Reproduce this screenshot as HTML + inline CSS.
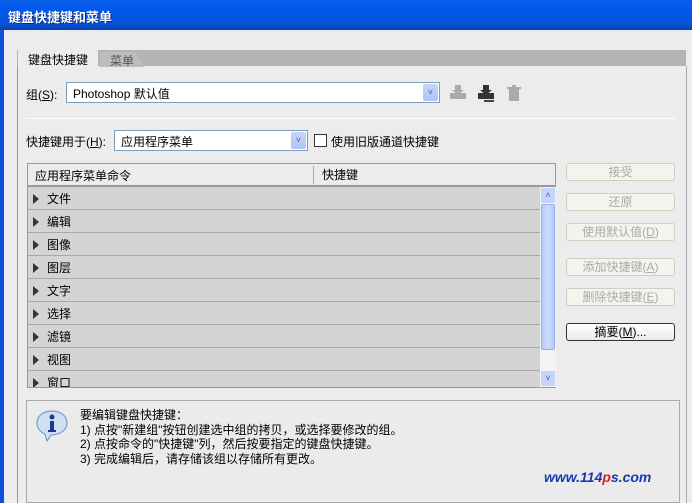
<!DOCTYPE html><html><head><meta charset="utf-8"><style>
*{box-sizing:border-box;margin:0;padding:0}
body{width:692px;height:503px;overflow:hidden;background:#ececec;font-family:"Liberation Sans","Noto Sans CJK SC",sans-serif;font-size:12px;color:#000;position:relative}
.a{position:absolute}
.title{left:0;top:0;width:692px;height:30px;background:linear-gradient(#0a5fe8,#0058ee 30%,#0a52d8 80%,#0840b0);color:#fff;font-weight:bold;font-size:13px;padding:7px 0 0 8px;text-shadow:1px 1px #0a2a80}
.lb{left:0;top:30px;width:4px;height:473px;background:#0a52d8}
.strip{left:17px;top:50px;width:669px;height:17px;background:#b4b4b4}
.panel{left:17px;top:66px;width:670px;height:437px;border-left:1px solid #999;border-right:1px solid #aaa;background:#ececec}
.tab1{left:18px;top:50px;width:80px;height:17px;background:#ececec;padding:1px 0 0 10px;font-size:12px}
.tab2{left:100px;top:52px;width:44px;height:15px;background:#bdbdbd;padding:0 0 0 10px;color:#555;clip-path:polygon(0 0,80% 0,100% 100%,0 100%)}
.combo{background:#fff;border:1px solid #7f9db9;height:21px;padding:2px 0 0 6px}
.dd{position:absolute;right:1px;top:1px;width:15px;height:17px;background:linear-gradient(#c5d5fd,#b0c4f5);border-radius:2px;color:#4d6185;font-size:9px;text-align:center;line-height:17px}
.hr{height:1px;background:#aaa;border-bottom:1px solid #fff}
.list{left:27px;top:163px;width:529px;height:225px;border:1px solid #999;background:#d4d4d4;overflow:hidden}
.hdr{height:23px;background:#ececec;border-bottom:2px solid #999;position:relative;padding:3px 0 0 7px}
.row{height:23px;border-bottom:1px solid #a8a8a8;padding:3px 0 0 5px;width:512px;background:#d4d4d4}
.tri{display:inline-block;width:0;height:0;border-left:6px solid #334;border-top:5px solid transparent;border-bottom:5px solid transparent;margin-right:8px;vertical-align:-1px}
.sb{left:540px;top:187px;width:16px;height:200px;background:#f3f3f3}
.btn{position:absolute;left:566px;width:109px;height:18px;border:1px solid #cfcfc0;border-radius:3px;background:#f4f4ee;color:#aaa;text-align:center;line-height:16px}
.info{left:26px;top:400px;width:654px;height:103px;border:1px solid #aaa;background:#ebebeb}
</style></head><body>
<div class="a title">键盘快捷键和菜单</div>
<div class="a lb"></div>
<div class="a strip"></div>
<div class="a panel"></div>
<div class="a tab1">键盘快捷键</div>
<div class="a tab2">菜单</div>
<div class="a" style="left:26px;top:86px">组(<u>S</u>):</div>
<div class="a combo" style="left:66px;top:82px;width:374px">Photoshop 默认值<div class="dd">&#x2C5;</div></div>
<svg class="a" style="left:448px;top:83px" width="76" height="20">
<g fill="#aaa"><rect x="2" y="10" width="16" height="6"/><path d="M7 2h6v5h3l-6 5-6-5h3z"/></g>
<g fill="#333"><rect x="30" y="10" width="16" height="6"/><path d="M35 2h6v5h3l-6 5-6-5h3z"/><rect x="36" y="17" width="10" height="2" fill="#444"/></g>
<g fill="#aaa"><rect x="61" y="6" width="10" height="12"/><rect x="59" y="4" width="14" height="2"/><rect x="64" y="2" width="4" height="2"/></g>
</svg>
<div class="a hr" style="left:26px;top:118px;width:650px"></div>
<div class="a" style="left:26px;top:133px">快捷键用于(<u>H</u>):</div>
<div class="a combo" style="left:114px;top:130px;width:194px">应用程序菜单<div class="dd">&#x2C5;</div></div>
<div class="a" style="left:314px;top:134px;width:13px;height:13px;border:1px solid #333;background:#fff"></div>
<div class="a" style="left:331px;top:133px">使用旧版通道快捷键</div>
<div class="a list">
<div class="hdr">应用程序菜单命令<div style="position:absolute;left:285px;top:2px;height:18px;border-left:1px solid #aaa;padding-left:8px">快捷键</div></div>
<div class="row"><span class="tri"></span>文件</div>
<div class="row"><span class="tri"></span>编辑</div>
<div class="row"><span class="tri"></span>图像</div>
<div class="row"><span class="tri"></span>图层</div>
<div class="row"><span class="tri"></span>文字</div>
<div class="row"><span class="tri"></span>选择</div>
<div class="row"><span class="tri"></span>滤镜</div>
<div class="row"><span class="tri"></span>视图</div>
<div class="row"><span class="tri"></span>窗口</div>
</div>
<div class="a sb">
<div style="position:absolute;left:1px;top:1px;width:14px;height:15px;background:#c4d4fb;color:#4d6185;font-size:9px;text-align:center;line-height:15px">&#x2C4;</div>
<div style="position:absolute;left:1px;top:17px;width:14px;height:146px;background:linear-gradient(90deg,#b8cbf7,#cbdafc,#b8cbf7);border:1px solid #98b0e8;border-radius:2px"></div>
<div style="position:absolute;left:1px;top:184px;width:14px;height:15px;background:#c4d4fb;color:#4d6185;font-size:9px;text-align:center;line-height:15px">&#x2C5;</div>
</div>
<div class="btn" style="top:163px">接受</div>
<div class="btn" style="top:193px">还原</div>
<div class="btn" style="top:223px">使用默认值(<u>D</u>)</div>
<div class="btn" style="top:258px">添加快捷键(<u>A</u>)</div>
<div class="btn" style="top:288px">删除快捷键(<u>E</u>)</div>
<div class="btn" style="top:323px;border-color:#333;color:#000;background:linear-gradient(#fff,#ecebe6)">摘要(<u>M</u>)...</div>
<div class="a info"></div>
<svg class="a" style="left:35px;top:409px" width="34" height="34"><path d="M17 2C8 2 2 7 2 14c0 5 3 9 8 11l2 7 4-6c9 0 16-5 16-12S26 2 17 2z" fill="#cfe0f5" stroke="#6c8fbf"/><circle cx="17" cy="8" r="2.5" fill="#1a3a8a"/><rect x="15" y="12" width="4" height="11" fill="#1a3a8a"/><rect x="13" y="21" width="8" height="2" fill="#1a3a8a"/></svg>
<div class="a" style="left:80px;top:408px;line-height:14.5px">要编辑键盘快捷键：<br>1) 点按"新建组"按钮创建选中组的拷贝，或选择要修改的组。<br>2) 点按命令的"快捷键"列，然后按要指定的键盘快捷键。<br>3) 完成编辑后，请存储该组以存储所有更改。</div>
<div class="a" style="left:544px;top:469px;font-weight:bold;font-style:italic;font-size:14px;color:#1838b0">www.114<span style="color:#e02020">p</span>s.com</div>
</body></html>
